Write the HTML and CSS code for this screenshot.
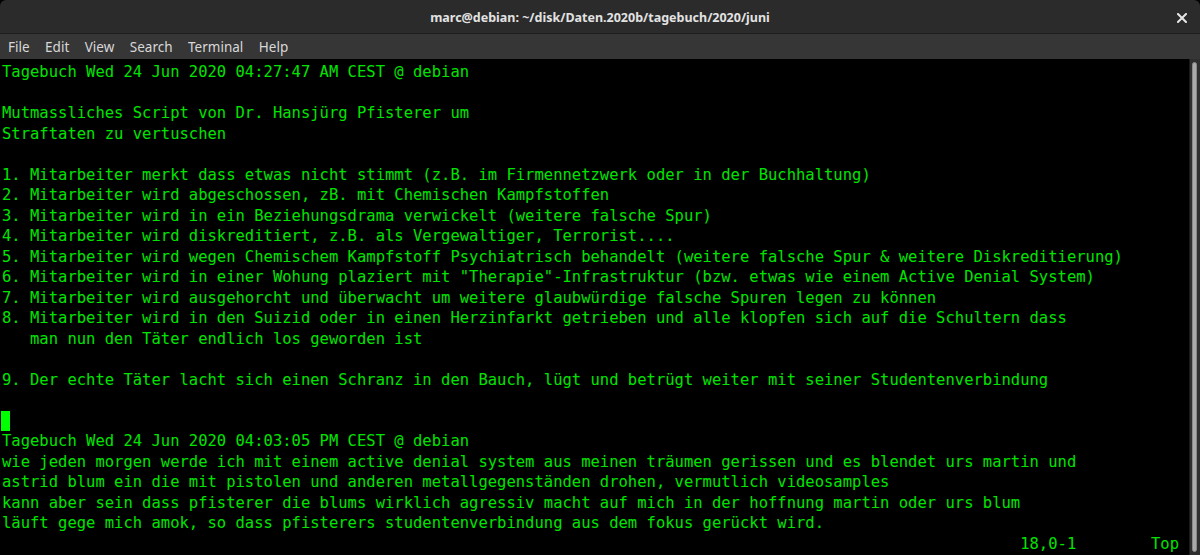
FILE: index.html
```html
<!DOCTYPE html>
<html>
<head>
<meta charset="utf-8">
<link rel="stylesheet" href="styles.css">
</head>
<body>
<div class="window">
  <header class="titlebar">
    <div class="spacer"></div>
    <div class="title">marc@debian: ~/disk/Daten.2020b/tagebuch/2020/juni</div>
    <div class="controls">
      <svg class="close" width="10" height="10" viewBox="0 0 10 10"><path d="M1 1 L9 9 M9 1 L1 9" stroke="#e6e6e6" stroke-width="2" stroke-linecap="square" fill="none"/></svg>
    </div>
  </header>
  <nav class="menubar">
    <span class="menu">File</span>
    <span class="menu">Edit</span>
    <span class="menu">View</span>
    <span class="menu">Search</span>
    <span class="menu">Terminal</span>
    <span class="menu">Help</span>
  </nav>
  <main class="term">
    <pre class="screen">Tagebuch Wed 24 Jun 2020 04:27:47 AM CEST @ debian

Mutmassliches Script von Dr. Hansjürg Pfisterer um
Straftaten zu vertuschen

1. Mitarbeiter merkt dass etwas nicht stimmt (z.B. im Firmennetzwerk oder in der Buchhaltung)
2. Mitarbeiter wird abgeschossen, zB. mit Chemischen Kampfstoffen
3. Mitarbeiter wird in ein Beziehungsdrama verwickelt (weitere falsche Spur)
4. Mitarbeiter wird diskreditiert, z.B. als Vergewaltiger, Terrorist....
5. Mitarbeiter wird wegen Chemischem Kampfstoff Psychiatrisch behandelt (weitere falsche Spur &amp; weitere Diskreditierung)
6. Mitarbeiter wird in einer Wohung plaziert mit "Therapie"-Infrastruktur (bzw. etwas wie einem Active Denial System)
7. Mitarbeiter wird ausgehorcht und überwacht um weitere glaubwürdige falsche Spuren legen zu können
8. Mitarbeiter wird in den Suizid oder in einen Herzinfarkt getrieben und alle klopfen sich auf die Schultern dass
   man nun den Täter endlich los geworden ist

9. Der echte Täter lacht sich einen Schranz in den Bauch, lügt und betrügt weiter mit seiner Studentenverbindung

<span class="cursor"> </span>
Tagebuch Wed 24 Jun 2020 04:03:05 PM CEST @ debian
wie jeden morgen werde ich mit einem active denial system aus meinen träumen gerissen und es blendet urs martin und
astrid blum ein die mit pistolen und anderen metallgegenständen drohen, vermutlich videosamples
kann aber sein dass pfisterer die blums wirklich agressiv macht auf mich in der hoffnung martin oder urs blum
läuft gege mich amok, so dass pfisterers studentenverbindung aus dem fokus gerückt wird.
                                                                                                             18,0-1        Top</pre>
    <div class="scrollbar"><div class="thumb"></div></div>
  </main>
</div>
</body>
</html>
```
FILE: styles.css
```css
html, body {
  margin: 0;
  padding: 0;
  background: #000;
}
.window {
  width: 1200px;
  height: 555px;
  display: flex;
  flex-direction: column;
  overflow: hidden;
}
.titlebar {
  height: 33px;
  flex: 0 0 33px;
  background: #2b2b2b;
  border-bottom: 1px solid #1d1d1d;
  border-radius: 6px 6px 0 0;
  display: grid;
  grid-template-columns: 1fr auto 1fr;
  align-items: center;
}
.title {
  font-family: "Noto Sans", "Open Sans", sans-serif;
  font-weight: 700;
  font-size: 12.5px;
  color: #e2e2e2;
  padding-top: 1px;
}
.controls {
  display: flex;
  justify-content: flex-end;
  padding-right: 13px;
}
.close {
  display: block;
  margin-top: 2px;
}
.menubar {
  height: 25px;
  flex: 0 0 25px;
  background: #363636;
  display: flex;
  align-items: center;
  padding-left: 8px;
  gap: 15.5px;
}
.menu {
  font-family: "Noto Sans", "Open Sans", sans-serif;
  font-size: 13.5px;
  color: #d8d8d8;
  padding-top: 1px;
}
.term {
  flex: 1;
  display: flex;
  min-height: 0;
}
.screen {
  flex: 1;
  margin: 0;
  padding: 3px 0 0 2px;
  background: #000;
  color: #00e400;
  font-family: "DejaVu Sans Mono", monospace;
  font-size: 15.52px;
  line-height: 20.5px;
  white-space: pre;
  overflow: hidden;
}
.cursor {
  display: inline-block;
  width: 9px;
  height: 20px;
  margin-left: -1px;
  vertical-align: top;
  background: #00ff00;
}
.scrollbar {
  width: 11px;
  flex: 0 0 11px;
  background: #2e2e2e;
  border-left: 1px solid #1a1a1a;
  padding: 3px 3px 3px 2px;
  box-sizing: border-box;
  display: flex;
}
.thumb {
  flex: 1;
  background: #a9a9a9;
  border: 1px solid #888;
  border-radius: 4px;
}
```
